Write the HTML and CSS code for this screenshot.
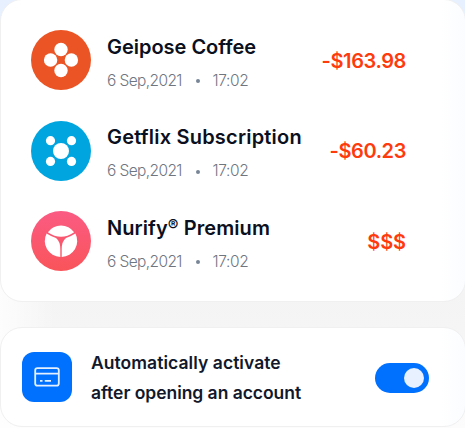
FILE: index.html
```html
<!DOCTYPE html>
<html lang="en">
<head>
    <meta charset="UTF-8">
    <meta name="viewport" content="width=device-width, initial-scale=1.0">
    <title>Transactions</title>
    <link rel="stylesheet" href="styles.css">
</head>
<body>
    <div class="wallet">
        <div class="card transactions">
            <div class="transaction">
                <svg class="logo" viewBox="0 0 60 60">
                    <circle cx="30" cy="30" r="30" fill="#eb5424"/>
                    <g fill="#fff">
                        <circle cx="30" cy="19.5" r="6.7"/>
                        <circle cx="19.6" cy="30" r="6.7"/>
                        <circle cx="40.4" cy="30" r="6.7"/>
                        <circle cx="30" cy="40.5" r="6.7"/>
                    </g>
                </svg>
                <div class="info">
                    <div class="name name-coffee">Geipose Coffee</div>
                    <div class="date"><span>6 Sep,2021</span><i class="dot"></i><span class="time">17:02</span></div>
                </div>
                <div class="amount">-$163.98</div>
            </div>
            <div class="transaction">
                <svg class="logo" viewBox="0 0 60 60">
                    <circle cx="30" cy="30" r="30" fill="#00a5df"/>
                    <g fill="#fff">
                        <circle cx="30" cy="30" r="8"/>
                        <circle cx="19.5" cy="19.7" r="4.6"/>
                        <circle cx="40.5" cy="19.7" r="4.6"/>
                        <circle cx="19.5" cy="40.4" r="4.6"/>
                        <circle cx="40.5" cy="40.4" r="4.6"/>
                    </g>
                </svg>
                <div class="info">
                    <div class="name name-getflix">Getflix Subscription</div>
                    <div class="date"><span>6 Sep,2021</span><i class="dot"></i><span class="time">17:02</span></div>
                </div>
                <div class="amount">-$60.23</div>
            </div>
            <div class="transaction">
                <svg class="logo" viewBox="0 0 60 60">
                    <defs>
                        <linearGradient id="pink" x1="0" y1="0" x2="0" y2="1">
                            <stop offset="0" stop-color="#fb5b83"/>
                            <stop offset="1" stop-color="#f9545a"/>
                        </linearGradient>
                    </defs>
                    <circle cx="30" cy="30" r="30" fill="url(#pink)"/>
                    <g fill="#fff">
                        <path d="M16.9 21.2A16 16 0 0 1 43.1 21.2Q36.5 25.8 30 25.8Q23.5 25.8 16.9 21.2Z"/>
                        <path d="M15.6 22.6Q21 26 25 27Q29.3 30.5 29.3 38V46A16 16 0 0 1 15.6 22.6Z"/>
                        <path d="M44.4 22.6Q39 26 35 27Q30.7 30.5 30.7 38V46A16 16 0 0 0 44.4 22.6Z"/>
                    </g>
                </svg>
                <div class="info">
                    <div class="name name-nurify">Nurify<span class="reg">®</span> Premium</div>
                    <div class="date"><span>6 Sep,2021</span><i class="dot"></i><span class="time">17:02</span></div>
                </div>
                <div class="amount amount-range">$$$</div>
            </div>
        </div>

        <div class="card activate">
            <div class="activate-icon">
                <svg width="26" height="20" viewBox="0 0 26 20" fill="none" stroke="#e5f0ff" stroke-width="1.8">
                    <rect x="1.2" y="1.2" width="23.6" height="17.4" rx="2.2"/>
                    <path d="M1 6.7H25M6 13.9H8.5M10.8 13.9H17"/>
                </svg>
            </div>
            <div class="activate-text">
                <div class="line-one">Automatically activate</div>
                <div class="line-two">after opening an account</div>
            </div>
            <div class="switch"></div>
        </div>
    </div>
</body>
</html>
```

FILE: styles.css
```css
* {
    box-sizing: border-box;
}
body {
    margin: 0;
    height: 428px;
    overflow: hidden;
    background: linear-gradient(to bottom, #e6f0ff 0, #eef3fb 60px, #f4f4f4 290px, #f5f5f5 330px, #fcfcfc 428px);
    font-family: Inter, "Liberation Sans", sans-serif;
    color: #11182b;
}
.wallet {
    display: flex;
    flex-direction: column;
    gap: 25px;
    height: 428px;
    background: linear-gradient(to right, rgba(255,255,255,0.8), rgba(255,255,255,0) 55px) 0 280px / 100% 148px no-repeat;
}
.card {
    width: 466px;
    background: linear-gradient(to right, #fff 440px, #fafcff 466px);
    border: 1px solid #f0f0f1;
    border-radius: 22px;
}
.transactions {
    height: 303px;
    margin-top: -1px;
    padding: 30px 59px 0 30px;
    display: flex;
    flex-direction: column;
    gap: 30.5px;
}
.transaction {
    display: flex;
    align-items: center;
    height: 60px;
}
.logo {
    width: 60px;
    height: 60px;
    margin-right: 16px;
    flex-shrink: 0;
}
.info {
    flex: 1;
    white-space: nowrap;
}
.name {
    margin-top: 1px;
    font-size: 20px;
    font-weight: 600;
    line-height: 32px;
    color: #0b1020;
}
.name-coffee {
    letter-spacing: -0.02px;
}
.name-getflix {
    letter-spacing: 0.2px;
}
.name-nurify {
    letter-spacing: 0.08px;
}
.reg {
    position: relative;
    top: -4px;
    line-height: 1;
    font-size: 16px;
}
.date {
    display: flex;
    align-items: center;
    font-size: 15.5px;
    font-weight: 300;
    line-height: 24px;
    padding-top: 8.4px;
    height: 28px;
    letter-spacing: -0.6px;
    color: #6f7682;
}
.time {
    letter-spacing: -0.35px;
}
.dot {
    width: 4px;
    height: 4px;
    margin: 1px 12px 0 14.5px;
    border-radius: 50%;
    background-color: #778596;
}
.amount {
    padding-top: 1.5px;
    font-size: 20px;
    font-weight: 600;
    letter-spacing: -0.4px;
    color: #ff3a0c;
    white-space: nowrap;
}
.amount-range {
    letter-spacing: -0.1px;
}
.activate {
    display: flex;
    align-items: center;
    height: 100px;
    padding: 0 36px 0 21px;
}
.activate-icon {
    display: flex;
    align-items: center;
    justify-content: center;
    width: 50px;
    height: 50px;
    margin-right: 19px;
    border-radius: 12px;
    background-color: #0071ff;
}
.activate-text {
    flex: 1;
    padding-top: 1px;
    font-size: 17.5px;
    font-weight: 600;
    line-height: 30px;
    white-space: nowrap;
}
.line-one {
    letter-spacing: 0.05px;
}
.line-two {
    letter-spacing: -0.04px;
}
.switch {
    display: flex;
    align-items: center;
    justify-content: flex-end;
    width: 54.5px;
    height: 30px;
    margin-top: 1px;
    padding-right: 5px;
    border-radius: 15px;
    background-color: #0071ff;
}
.switch::after {
    content: "";
    width: 20px;
    height: 20px;
    border-radius: 50%;
    background-color: #e8f1ff;
}
```
